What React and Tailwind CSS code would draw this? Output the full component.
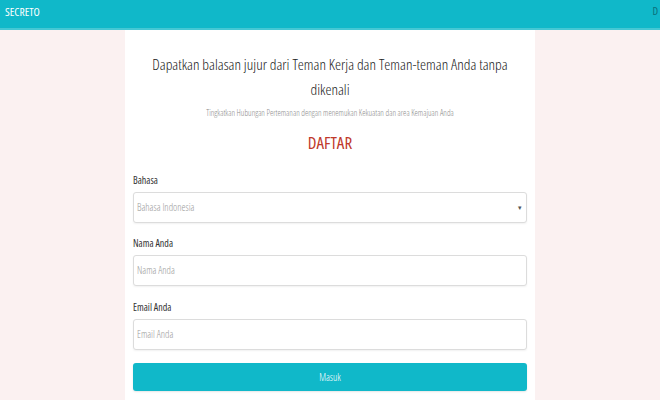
import React from 'react';

const font = { fontFamily: '"Open Sans", Roboto, sans-serif' };

function Field({ label, placeholder, select, top }) {
    return (
        <div className={top}>
            <div className="text-[10px] leading-[14px] text-[#333]">{label}</div>
            <div className="relative mt-[5px] h-[31px] rounded-[3px] border border-[#dcdcdc] bg-white shadow-[0_1px_2px_rgba(0,0,0,0.06)] flex items-center px-[3px]">
                <span className="text-[10px] font-light text-[#9a9a9a]">{placeholder}</span>
                {select && <span className="absolute right-[4px] top-[10px] text-[7px] text-[#555]">▾</span>}
            </div>
        </div>
    );
}

export default function App() {
    return (
        <div className="w-[660px] h-[400px] overflow-hidden bg-[#fbf1f1] font-stretch-condensed" style={font}>
            <div className="h-[30px] bg-[#10b8c9] border-b-2 border-[#45c8d4] flex items-start justify-between pt-[3px] px-[5px]">
                <span className="text-[11.5px] text-white">SECRETO</span>
                <span className="text-[11px] text-[#0b6f7a] -mr-[3px]">D</span>
            </div>
            <div className="mx-auto w-[410px] h-[370px] bg-white px-[8px] pt-[22px]">
                <h1 className="text-center text-[15.3px] leading-[25px] text-[#222] font-light">
                    Dapatkan balasan jujur dari Teman Kerja dan Teman-teman Anda tanpa dikenali
                </h1>
                <p className="mt-[5px] text-center text-[8.4px] leading-[12px] text-[#8a8a8a] font-light">
                    Tingkatkan Hubungan Pertemanan dengan menemukan Kekuatan dan area Kemajuan Anda
                </p>
                <div className="mt-[12px] text-center text-[17px] leading-[24px] text-[#c0392b]">DAFTAR</div>
                <Field top="mt-[18px]" label="Bahasa" placeholder="Bahasa Indonesia" select />
                <Field top="mt-[13px]" label="Nama Anda" placeholder="Nama Anda" />
                <Field top="mt-[14px]" label="Email Anda" placeholder="Email Anda" />
                <button className="mt-[13px] w-full h-[28px] rounded-[3px] bg-[#10b8c9] text-white text-[10px] font-light shadow-[0_1px_2px_rgba(0,0,0,0.1)]">
                    Masuk
                </button>
            </div>
        </div>
    );
}
